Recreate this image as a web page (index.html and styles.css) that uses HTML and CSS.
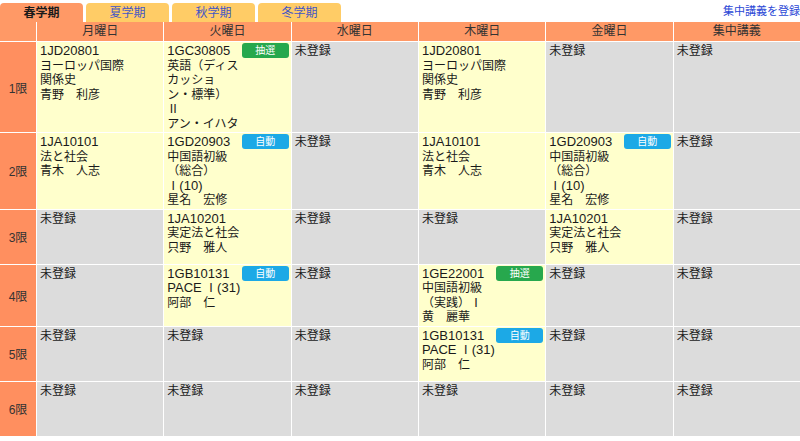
FILE: index.html
```html
<!DOCTYPE html>
<html lang="ja">
<head>
<meta charset="utf-8">
<title>時間割</title>
<link rel="stylesheet" href="styles.css">
</head>
<body>
<div class="page">
  <div class="topbar">
    <div class="tabs">
      <div class="tab active">春学期</div>
      <div class="tab">夏学期</div>
      <div class="tab">秋学期</div>
      <div class="tab">冬学期</div>
    </div>
    <a class="reglink" href="#">集中講義を登録</a>
  </div>
  <div class="grid">
    <div class="hd corner"></div>
    <div class="hd">月曜日</div>
    <div class="hd">火曜日</div>
    <div class="hd">水曜日</div>
    <div class="hd">木曜日</div>
    <div class="hd">金曜日</div>
    <div class="hd">集中講義</div>

    <div class="period">1限</div>
    <div class="cell on"><span class="code">1JD20801</span><br>ヨーロッパ国際<br>関係史<br>青野　利彦</div>
    <div class="cell on"><span class="badge lottery">抽選</span><span class="code">1GC30805</span><br>英語（ディス<br>カッショ<br>ン・標準）<br>Ⅱ<br>アン・イハタ</div>
    <div class="cell off">未登録</div>
    <div class="cell on"><span class="code">1JD20801</span><br>ヨーロッパ国際<br>関係史<br>青野　利彦</div>
    <div class="cell off">未登録</div>
    <div class="cell off">未登録</div>

    <div class="period">2限</div>
    <div class="cell on"><span class="code">1JA10101</span><br>法と社会<br>青木　人志</div>
    <div class="cell on"><span class="badge auto">自動</span><span class="code">1GD20903</span><br>中国語初級<br>（総合）<br>Ⅰ<span class="code">(10)</span><br>星名　宏修</div>
    <div class="cell off">未登録</div>
    <div class="cell on"><span class="code">1JA10101</span><br>法と社会<br>青木　人志</div>
    <div class="cell on"><span class="badge auto">自動</span><span class="code">1GD20903</span><br>中国語初級<br>（総合）<br>Ⅰ<span class="code">(10)</span><br>星名　宏修</div>
    <div class="cell off">未登録</div>

    <div class="period">3限</div>
    <div class="cell off">未登録</div>
    <div class="cell on"><span class="code">1JA10201</span><br>実定法と社会<br>只野　雅人</div>
    <div class="cell off">未登録</div>
    <div class="cell off">未登録</div>
    <div class="cell on"><span class="code">1JA10201</span><br>実定法と社会<br>只野　雅人</div>
    <div class="cell off">未登録</div>

    <div class="period">4限</div>
    <div class="cell off">未登録</div>
    <div class="cell on"><span class="badge auto">自動</span><span class="code">1GB10131</span><br><span class="code">PACE</span> Ⅰ<span class="code">(31)</span><br>阿部　仁</div>
    <div class="cell off">未登録</div>
    <div class="cell on"><span class="badge lottery">抽選</span><span class="code">1GE22001</span><br>中国語初級<br>（実践）Ⅰ<br>黄　麗華</div>
    <div class="cell off">未登録</div>
    <div class="cell off">未登録</div>

    <div class="period">5限</div>
    <div class="cell off">未登録</div>
    <div class="cell off">未登録</div>
    <div class="cell off">未登録</div>
    <div class="cell on"><span class="badge auto">自動</span><span class="code">1GB10131</span><br><span class="code">PACE</span> Ⅰ<span class="code">(31)</span><br>阿部　仁</div>
    <div class="cell off">未登録</div>
    <div class="cell off">未登録</div>

    <div class="period">6限</div>
    <div class="cell off">未登録</div>
    <div class="cell off">未登録</div>
    <div class="cell off">未登録</div>
    <div class="cell off">未登録</div>
    <div class="cell off">未登録</div>
    <div class="cell off">未登録</div>
  </div>
</div>
</body>
</html>
```
FILE: styles.css
```css
html, body {
  margin: 0;
  padding: 0;
  background: #ffffff;
  overflow: hidden;
}
body {
  font-family: "Liberation Sans", "Noto Sans CJK JP", sans-serif;
  font-size: 12px;
  color: #1a1a1a;
}
.page {
  width: 800px;
}
.topbar {
  display: flex;
  align-items: flex-end;
  height: 22px;
}
.tabs {
  display: flex;
  gap: 3px;
}
.tab {
  width: 83px;
  height: 17px;
  padding-top: 2px;
  line-height: 17px;
  text-align: center;
  background: #ffcc66;
  color: #3f55c6;
  border-radius: 4px 4px 0 0;
}
.tab.active {
  background: #ff9966;
  color: #1a1a1a;
  font-weight: bold;
}
.reglink {
  margin-left: auto;
  align-self: center;
  color: #2a47d6;
  text-decoration: none;
  font-size: 11px;
  line-height: 14px;
}
.grid {
  display: grid;
  grid-template-columns: 36px repeat(6, 1fr);
  grid-template-rows: 19px;
  grid-auto-rows: minmax(54px, auto);
  gap: 1px;
}
.hd {
  background: #ff9966;
  text-align: center;
  line-height: 19px;
  color: #333333;
}
.period {
  background: #ff8f5f;
  display: flex;
  align-items: center;
  justify-content: center;
  color: #333333;
}
.cell {
  padding: 2px 3px 1px 3px;
  line-height: 14.5px;
  white-space: nowrap;
}
.code {
  font-size: 13px;
}
.cell.on {
  background: #ffffcc;
}
.cell.off {
  background: #dcdcdc;
}
.badge {
  float: right;
  width: 47px;
  height: 15px;
  line-height: 15px;
  margin: -1px -1px 0 4px;
  border-radius: 3px;
  color: #ffffff;
  font-size: 10px;
  text-align: center;
}
.badge.lottery {
  background: #27a84d;
}
.badge.auto {
  background: #1ca9e6;
}
```
